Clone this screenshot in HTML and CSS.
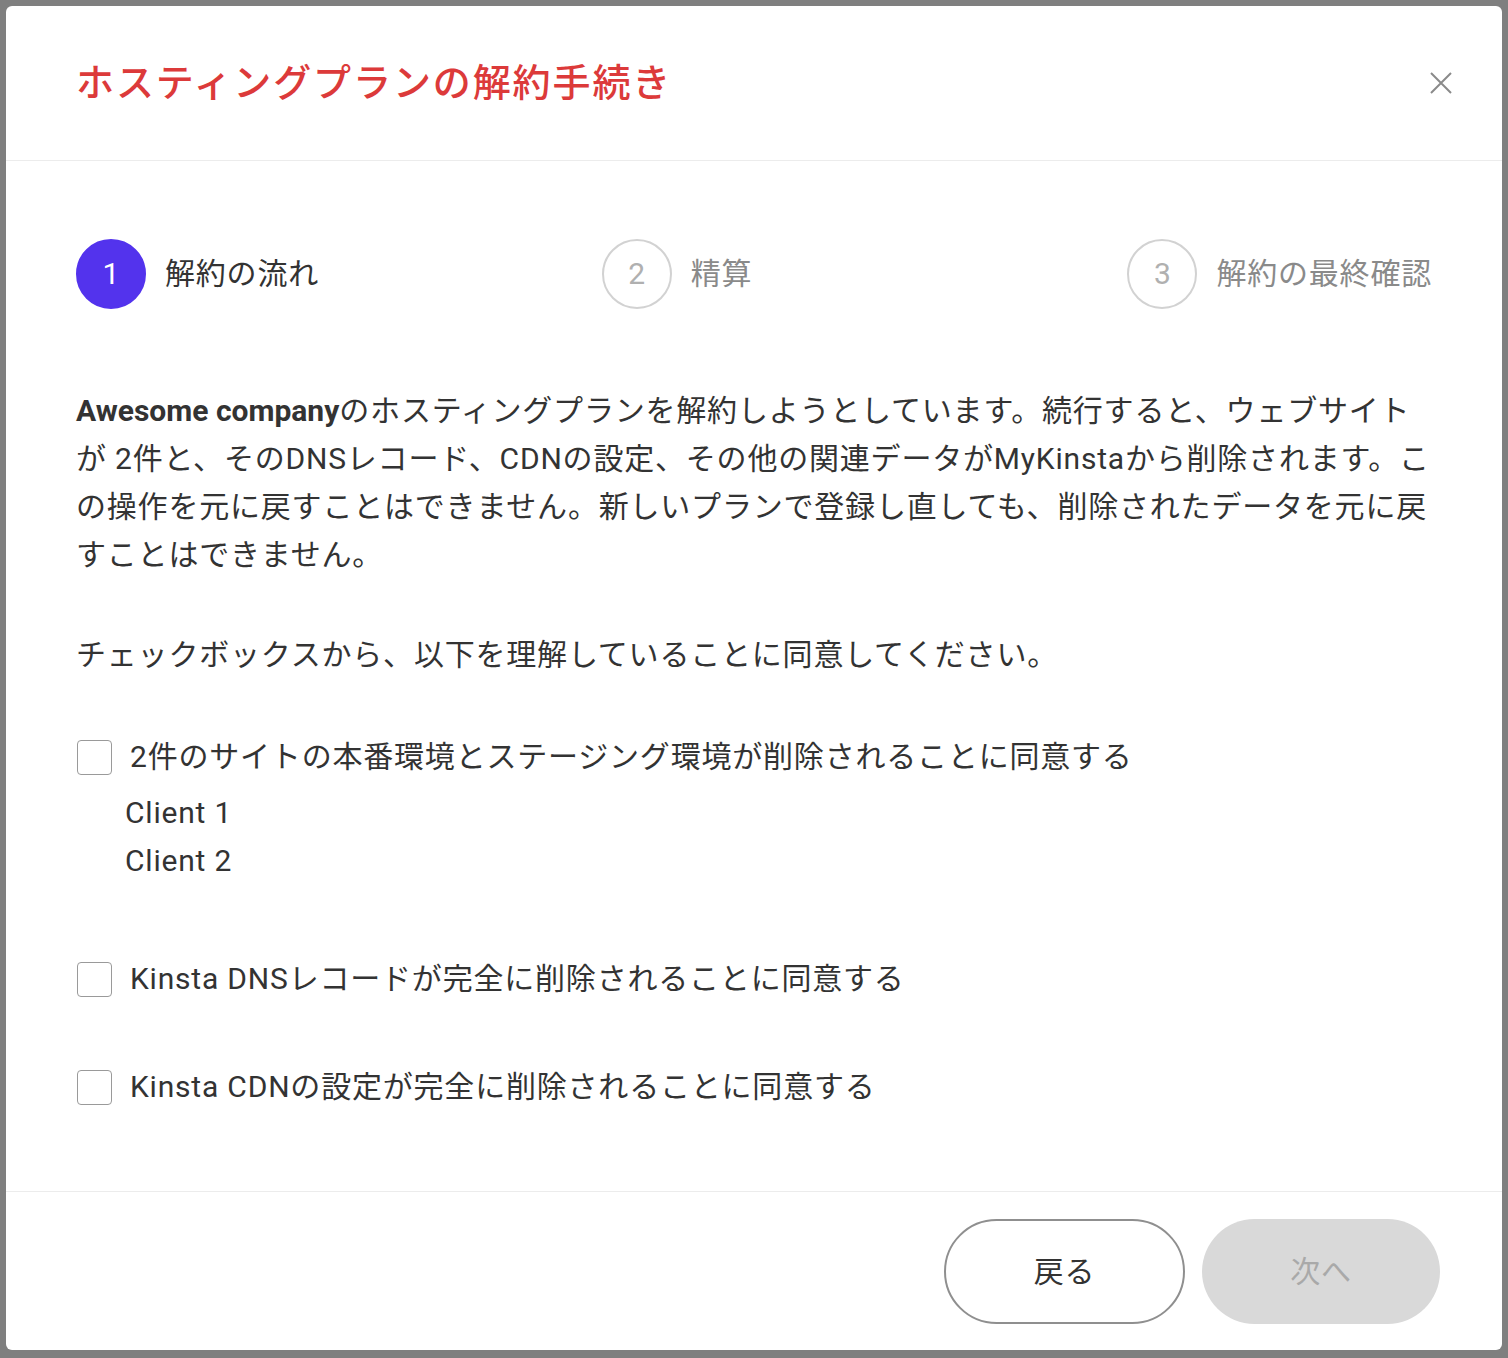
FILE: index.html
```html
<!DOCTYPE html>
<html lang="ja">
<head>
<meta charset="utf-8">
<title>ホスティングプランの解約手続き</title>
<link rel="stylesheet" href="styles.css">
</head>
<body>
<div class="modal">
  <header class="modal-header">
    <h1 class="modal-title">ホスティングプランの解約手続き</h1>
    <button class="close-btn" aria-label="閉じる">
      <svg width="22" height="22" viewBox="0 0 22 22"><path d="M1 1L21 21M21 1L1 21" stroke="#8a8a8a" stroke-width="2" fill="none"/></svg>
    </button>
  </header>
  <main class="modal-body">
    <ol class="steps">
      <li class="step active"><span class="step-num">1</span><span class="step-label">解約の流れ</span></li>
      <li class="step"><span class="step-num">2</span><span class="step-label">精算</span></li>
      <li class="step last"><span class="step-num">3</span><span class="step-label">解約の最終確認</span></li>
    </ol>
    <p class="intro"><strong>Awesome company</strong>のホスティングプランを解約しようとしています。続行すると、ウェブサイトが 2件と、そのDNSレコード、CDNの設定、その他の関連データがMyKinstaから削除されます。この操作を元に戻すことはできません。新しいプランで登録し直しても、削除されたデータを元に戻すことはできません。</p>
    <p class="instruction">チェックボックスから、以下を理解していることに同意してください。</p>
    <div class="agree agree-sites">
      <label class="check"><span class="box"></span><span>2件のサイトの本番環境とステージング環境が削除されることに同意する</span></label>
      <ul class="site-list">
        <li>Client 1</li>
        <li>Client 2</li>
      </ul>
    </div>
    <div class="agree agree-dns">
      <label class="check"><span class="box"></span><span>Kinsta DNSレコードが完全に削除されることに同意する</span></label>
    </div>
    <div class="agree agree-cdn">
      <label class="check"><span class="box"></span><span>Kinsta CDNの設定が完全に削除されることに同意する</span></label>
    </div>
  </main>
  <footer class="modal-footer">
    <button class="btn btn-back">戻る</button>
    <button class="btn btn-next" disabled>次へ</button>
  </footer>
</div>
</body>
</html>
```
FILE: styles.css
```css
* { box-sizing: border-box; }
html, body { margin: 0; }
body {
  background: #7f7f7f;
  padding: 6px 6px 8px 6px;
  font-family: Roboto, "Noto Sans CJK JP", sans-serif;
  color: #333;
}
.modal {
  width: 1496px;
  height: 1344px;
  background: #fff;
  border-radius: 6px;
  display: flex;
  flex-direction: column;
  overflow: hidden;
}
.modal-header {
  height: 155px;
  flex: none;
  display: flex;
  align-items: center;
  justify-content: space-between;
  padding: 0 50px 0 70px;
  border-bottom: 1px solid #ececec;
}
.modal-title {
  margin: 0;
  font-size: 38px;
  font-weight: 500;
  letter-spacing: 1.9px;
  color: #dc3a3a;
  line-height: 1;
}
.close-btn {
  border: 0;
  background: none;
  padding: 0;
  width: 22px;
  height: 22px;
  display: flex;
  cursor: pointer;
}
.modal-body {
  flex: 1;
  padding: 78px 70px 0 70px;
  font-size: 30px;
  letter-spacing: 0.8px;
  line-height: 48px;
}
.steps {
  list-style: none;
  margin: 0;
  padding: 0;
  display: flex;
  height: 70px;
}
.step {
  flex: 1;
  display: flex;
  align-items: center;
  gap: 19px;
}
.step.last { flex: none; }
.step-num {
  width: 70px;
  height: 70px;
  border-radius: 50%;
  border: 2px solid #d2d2d2;
  color: #b0b0b0;
  display: flex;
  align-items: center;
  justify-content: center;
  font-size: 30px;
  letter-spacing: 0;
}
.step-label { color: #8a8a8a; }
.step.active .step-num {
  background: #5333ed;
  border-color: #5333ed;
  color: #fff;
}
.step.active .step-label { color: #333; }
.intro { margin: 78px 0 0 0; }
.intro strong { font-weight: 700; letter-spacing: 0; }
.instruction { margin: 52px 0 0 0; }
.agree { margin: 0; }
.agree-sites { margin-top: 54px; }
.agree-dns { margin-top: 70px; }
.agree-cdn { margin-top: 60px; }
.check {
  display: flex;
  align-items: center;
  gap: 18px;
}
.box {
  width: 35px;
  height: 35px;
  border: 1.5px solid #9a9a9a;
  border-radius: 4px;
  flex: none;
  margin-left: 1px;
}
.site-list {
  list-style: none;
  margin: 8px 0 0 0;
  padding: 0 0 0 49px;
}
.modal-footer {
  flex: none;
  height: 159px;
  border-top: 1px solid #ececec;
  display: flex;
  align-items: center;
  justify-content: flex-end;
  gap: 17px;
  padding: 0 62px 0 0;
}
.btn {
  height: 105px;
  border-radius: 53px;
  font-family: Roboto, "Noto Sans CJK JP", sans-serif;
  font-size: 30px;
  letter-spacing: 0.8px;
  padding: 0 0 5px 0;
}
.btn-back {
  width: 241px;
  background: #fff;
  border: 2px solid #8f8f8f;
  color: #333;
}
.btn-next {
  width: 238px;
  background: #d9d9d9;
  border: 0;
  color: #a9a9a9;
}
```
